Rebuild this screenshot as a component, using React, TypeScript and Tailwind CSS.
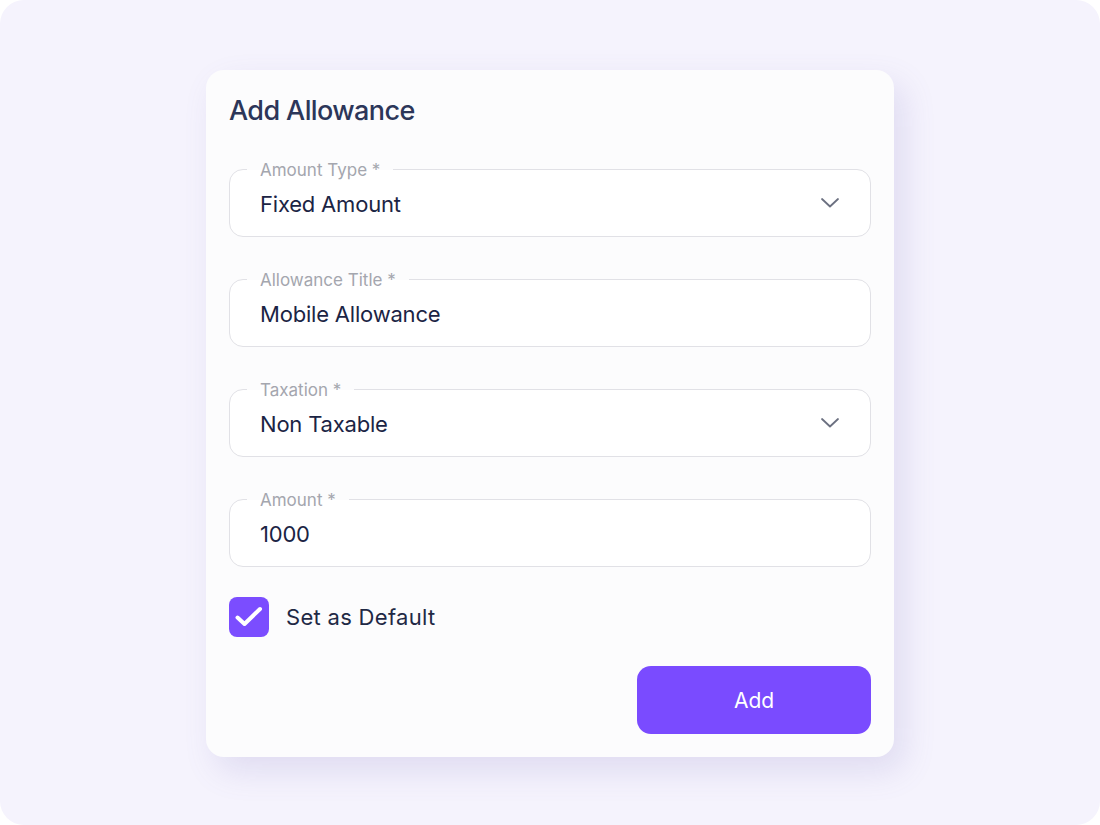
import React from "react";

function Chevron() {
  return (
    <svg width="20" height="12" viewBox="0 0 20 12" fill="none" className="text-[#6b7080]">
      <path d="M2 2L10 9.5L18 2" stroke="currentColor" strokeWidth="1.8" strokeLinecap="round" strokeLinejoin="round" />
    </svg>
  );
}

function Field({ label, value, select }: { label: string; value: string; select?: boolean }) {
  return (
    <div className="relative h-[68px] rounded-[14px] border border-[#e1e1e6] bg-white flex items-center pl-[30px] pr-[30px]">
      <span className="absolute left-[17px] top-0 -translate-y-1/2 px-[13px] bg-[linear-gradient(to_bottom,#fcfcfd_50%,#ffffff_50%)] text-[17px] leading-[20px] text-[#a4a6ae]">
        {label}
      </span>
      <span className="flex-1 text-[22px] leading-[28px] text-[#1b2444] tracking-[-0.2px] pt-[2px]">{value}</span>
      {select && <Chevron />}
    </div>
  );
}

export default function App() {
  return (
    <div className="w-[1100px] h-[825px] bg-white" style={{ fontFamily: "Inter, 'Noto Sans', sans-serif" }}>
      <div className="w-full h-full rounded-[24px] bg-[#f5f3fd] flex items-start justify-center pt-[70px]">
        <div className="w-[688px] h-[687px] rounded-[18px] bg-[#fcfcfd] shadow-[10px_14px_32px_rgba(110,100,180,0.16)] px-[23px] pt-[92px] relative">
          <h1 className="absolute left-[23px] top-[24px] text-[27px] leading-[34px] font-medium text-[#2c3659] tracking-[-0.6px]">
            Add Allowance
          </h1>
          <div className="flex flex-col gap-[42px] pt-[7px]">
            <Field label="Amount Type *" value="Fixed Amount" select />
            <Field label="Allowance Title *" value="Mobile Allowance" />
            <Field label="Taxation *" value="Non Taxable" select />
            <Field label="Amount *" value="1000" />
          </div>
          <div className="flex items-center gap-[17px] mt-[30px]">
            <div className="w-[40px] h-[40px] rounded-[8px] bg-[#7b4dff] flex items-center justify-center">
              <svg width="40" height="40" viewBox="0 0 40 40" fill="none">
                <path d="M8.5 20.5L15.5 27L31 12" stroke="white" strokeWidth="4" strokeLinecap="round" strokeLinejoin="round" />
              </svg>
            </div>
            <span className="text-[22px] leading-[28px] text-[#1f2945] tracking-[0.3px]">Set as Default</span>
          </div>
          <div className="flex justify-end mt-[29px]">
            <button className="w-[234px] h-[68px] rounded-[14px] bg-[#7a4bff] text-white text-[21px] leading-[28px] pt-[2px]">
              Add
            </button>
          </div>
        </div>
      </div>
    </div>
  );
}
